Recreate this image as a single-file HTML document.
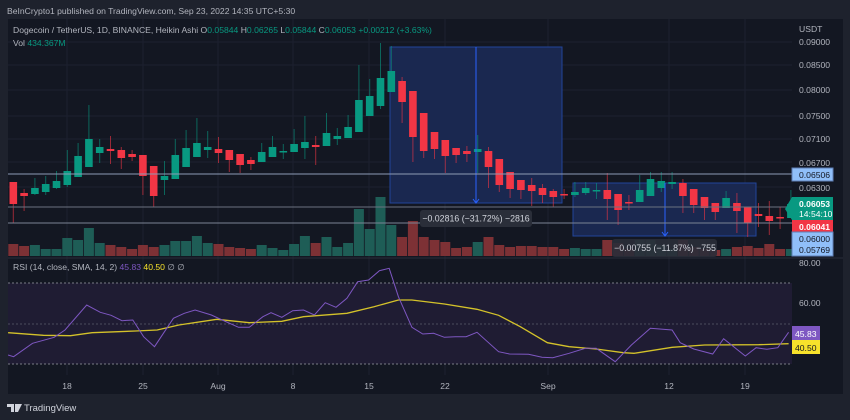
<!DOCTYPE html>
<html><head><meta charset="utf-8"><style>
html,body{margin:0;padding:0;background:#1e222d;width:850px;height:420px;overflow:hidden;font-family:"Liberation Sans",sans-serif}
svg{position:absolute;left:0;top:0}
</style></head><body>
<svg id="s" width="850" height="420" xmlns="http://www.w3.org/2000/svg" font-family="Liberation Sans, sans-serif">
<rect x="0" y="0" width="850" height="420" fill="#1e222d"/>
<rect x="8" y="19" width="835" height="375" fill="#131722"/>
<text x="7" y="14" font-size="8.6" fill="#b2b5be">BeInCrypto1 published on TradingView.com, Sep 23, 2022 14:35 UTC+5:30</text>
<g id="grid" stroke="#1d2130" stroke-width="1"></g>
<rect x="390" y="47" width="172" height="156" fill="#1a2850" stroke="#22449a" stroke-width="1"/>
<rect x="573" y="183" width="183" height="53" fill="#1a2850" stroke="#22449a" stroke-width="1"/>
<g id="vol"></g>
<g id="cnd"></g>
<line x1="476" y1="47" x2="476" y2="202" stroke="#2962ff" stroke-width="1"/>
<path d="M473 199 L476 203 L479 199" stroke="#2962ff" fill="none"/>
<line x1="665" y1="183" x2="665" y2="235" stroke="#2962ff" stroke-width="1"/>
<path d="M662 232 L665 236 L668 232" stroke="#2962ff" fill="none"/>
<line x1="8" y1="174" x2="792" y2="174" stroke="#8d9bb5" stroke-width="1"/>
<line x1="8" y1="207" x2="792" y2="207" stroke="#6b7280" stroke-width="1"/>
<line x1="8" y1="223" x2="792" y2="223" stroke="#7b8394" stroke-width="1"/>
<rect x="420" y="210" width="112" height="17" rx="3" fill="#2a2e39"/>
<text x="476" y="221.5" font-size="8.8" fill="#d1d4dc" text-anchor="middle">−0.02816 (−31.72%) −2816</text>
<rect x="612" y="239" width="105" height="18" rx="3" fill="#2a2e39" opacity="0.9"/>
<text x="665" y="251" font-size="8.8" fill="#d1d4dc" text-anchor="middle">−0.00755 (−11.87%) −755</text>
<text x="13" y="33" font-size="8.6" fill="#b2b5be">Dogecoin / TetherUS, 1D, BINANCE, Heikin Ashi  O<tspan fill="#089981">0.05844</tspan>  H<tspan fill="#089981">0.06265</tspan>  L<tspan fill="#089981">0.05844</tspan>  C<tspan fill="#089981">0.06053</tspan>  <tspan fill="#089981">+0.00212 (+3.63%)</tspan></text>
<text x="13" y="46" font-size="8.6" fill="#b2b5be">Vol  <tspan fill="#089981">434.367M</tspan></text>
<g font-size="8.6" fill="#b2b5be">
<text x="799" y="32">USDT</text>
<text x="799" y="45">0.09000</text>
<text x="799" y="68">0.08500</text>
<text x="799" y="93">0.08000</text>
<text x="799" y="119">0.07500</text>
<text x="799" y="142">0.07100</text>
<text x="799" y="166">0.06700</text>
<text x="799" y="191">0.06300</text>
<text x="799" y="266">80.00</text>
<text x="799" y="306">60.00</text>
</g>
<rect x="792" y="168" width="41" height="13" fill="#90bff9" stroke="#5f7fb5"/>
<text x="799" y="178" font-size="8.6" fill="#131722">0.06506</text>
<path d="M785 209 L792 197 L833 197 L833 220 L792 220 Z" fill="#089981"/>
<text x="799" y="207" font-size="8.6" fill="#fff" font-weight="bold">0.06053</text>
<text x="799" y="217" font-size="8.6" fill="#fff">14:54:10</text>
<rect x="792" y="220" width="41" height="12" fill="#f23645"/>
<text x="799" y="230" font-size="8.6" fill="#fff" font-weight="bold">0.06041</text>
<rect x="792" y="232" width="41" height="24" fill="#90bff9" stroke="#5f7fb5"/>
<text x="799" y="242" font-size="8.6" fill="#131722">0.06000</text>
<text x="799" y="253" font-size="8.6" fill="#131722">0.05769</text>
<line x1="8" y1="258" x2="843" y2="258" stroke="#2a2e39"/>
<rect x="8" y="283" width="784" height="81" fill="#1f1c33"/>
<g stroke="#787b86" stroke-dasharray="2,2" stroke-width="1">
<line x1="8" y1="283" x2="792" y2="283"/><line x1="8" y1="324" x2="792" y2="324" opacity="0.5"/><line x1="8" y1="364" x2="792" y2="364"/></g>
<text x="13" y="270" font-size="8.6" fill="#b2b5be">RSI (14, close, SMA, 14, 2)  <tspan fill="#7e57c2">45.83</tspan>  <tspan fill="#f7e22b">40.50</tspan>  ∅  ∅</text>
<polyline id="sma" fill="none" stroke="#d4c22a" stroke-width="1.3"/>
<polyline id="rsi" fill="none" stroke="#7e57c2" stroke-width="1"/>
<rect x="792" y="326" width="28" height="14" fill="#7e57c2"/>
<text x="795" y="337" font-size="8.6" fill="#fff">45.83</text>
<rect x="792" y="340" width="28" height="14" fill="#f7e22b"/>
<text x="795" y="351" font-size="8.6" fill="#131722">40.50</text>
<g font-size="8.6" fill="#b2b5be" text-anchor="middle">
<text x="67" y="389">18</text><text x="143" y="389">25</text><text x="218" y="389">Aug</text><text x="293" y="389">8</text><text x="369" y="389">15</text><text x="445" y="389">22</text><text x="548" y="389">Sep</text><text x="669" y="389">12</text><text x="745" y="389">19</text></g>
<text x="24" y="411" font-size="9.5" fill="#d1d4dc">TradingView</text>
<path d="M7 404 H14 V412 H11 V407 H7 Z M15 404 H22 L18 412 H15 Z" fill="#d1d4dc"/>
</svg>
<script>
var NS="http://www.w3.org/2000/svg";
function el(p,t,a){var e=document.createElementNS(NS,t);for(var k in a)e.setAttribute(k,a[k]);document.getElementById(p).appendChild(e);}
[67,143,218,293,369,445,548,669,745].forEach(function(x){el('grid','line',{x1:x,y1:19,x2:x,y2:375});});
[42,65,90,116,139,162,187,303,343].forEach(function(y){el('grid','line',{x1:8,y1:y,x2:792,y2:y});});
var C=[['r',182,204,182,223],['r',193,196,189,211],['g',188,194,178,195],['g',184,192,176,195],['g',181,188,171,189],['g',171,185,150,187],['g',156,177,143,177],['g',139,167,105,167],['g',147,153,139,163],['r',149,151,136,164],['r',150,158,147,169],['r',154,157,150,161],['r',155,176,155,195],['r',166,196,166,207],['g',176,180,161,195],['g',155,179,139,179],['g',148,167,130,167],['g',143,157,118,157],['g',147,150,131,158],['r',149,153,137,163],['r',150,160,150,172],['r',154,165,154,173],['r',160,164,157,170],['g',152,162,143,162],['g',147,157,136,157],['g',151,152,144,159],['g',144,152,129,152],['g',142,148,116,159],['r',145,147,136,165],['g',133,146,113,146],['g',136,139,128,145],['g',127,138,115,138],['g',100,132,65,132],['g',96,116,79,116],['g',78,106,43,109],['g',71,92,46,92],['r',81,102,77,123],['r',91,137,91,162],['r',113,151,113,158],['r',132,149,132,159],['r',140,156,140,173],['r',148,155,148,163],['r',151,154,146,162],['g',149,152,135,173],['r',151,167,147,188],['r',159,185,159,192],['r',172,189,172,198],['r',180,190,180,199],['r',185,191,178,206],['r',188,195,184,203],['r',191,197,189,207],['r',194,195,189,199],['g',192,195,182,197],['g',188,193,182,195],['g',190,191,183,199],['r',190,199,173,220],['r',194,210,194,225],['r',202,203,195,210],['g',190,202,175,202],['g',179,196,172,196],['g',181,188,172,192],['g',182,184,172,189],['r',183,196,179,213],['r',189,205,189,213],['r',197,208,197,220],['r',203,212,203,220],['g',198,208,191,208],['r',203,211,193,233],['r',207,223,207,237],['r',214,216,203,227],['r',216,221,201,235],['r',217,218,207,229],['g',204,218,190,218]];
var V=[244,246,245,249,249,238,240,228,243,245,247,249,245,247,245,241,241,236,243,244,247,248,249,245,248,250,244,236,243,237,247,243,209,229,197,225,237,221,237,240,242,248,247,242,237,245,247,246,246,247,247,249,248,249,249,240,243,249,240,240,245,249,240,247,249,250,249,247,246,248,244,249,249];
C.forEach(function(c,i){var x=13.3+10.8*i;var col=c[0]=='g'?'#089981':'#f23645';
 var vc=c[0]=='g'?'#1e5d56':'#7d3135';
 el('vol','rect',{x:x-5,y:V[i],width:10,height:256-V[i],fill:vc});
 el('cnd','line',{x1:x,y1:c[3],x2:x,y2:c[4],stroke:col,'stroke-width':1,opacity:0.6});
 el('cnd','rect',{x:x-3.8,y:c[1],width:7.6,height:Math.max(1.5,c[2]-c[1]),fill:col});});
function pts(a){return a.map(function(p){return (p[0]/1.845).toFixed(1)+','+(250+p[1]/3).toFixed(1)}).join(' ');}
document.getElementById('rsi').setAttribute('points',pts([[15,315],[25,320],[60,280],[100,262],[120,240],[160,165],[185,187],[205,196],[225,212],[245,210],[265,260],[285,290],[320,205],[340,190],[360,180],[390,195],[410,210],[440,232],[460,232],[485,200],[500,188],[520,202],[540,182],[560,180],[580,195],[600,158],[620,172],[640,145],[660,95],[680,90],[700,62],[718,55],[735,140],[760,232],[780,252],[800,250],[820,262],[840,260],[860,260],[880,247],[920,305],[940,312],[975,313],[1000,322],[1020,323],[1050,310],[1080,295],[1100,295],[1135,335],[1165,285],[1200,235],[1240,240],[1255,278],[1280,297],[1315,312],[1335,266],[1375,318],[1395,293],[1415,298],[1435,293],[1455,247]]));
document.getElementById('sma').setAttribute('points',pts([[15,248],[80,256],[130,257],[170,248],[250,243],[290,240],[330,225],[400,208],[460,218],[520,214],[560,200],[640,190],[690,170],[735,150],[760,150],[820,162],[880,178],[920,196],[960,230],[1010,278],[1050,290],[1100,297],[1150,308],[1170,310],[1240,292],[1300,285],[1400,284],[1455,281]]));
</script>
</body></html>
